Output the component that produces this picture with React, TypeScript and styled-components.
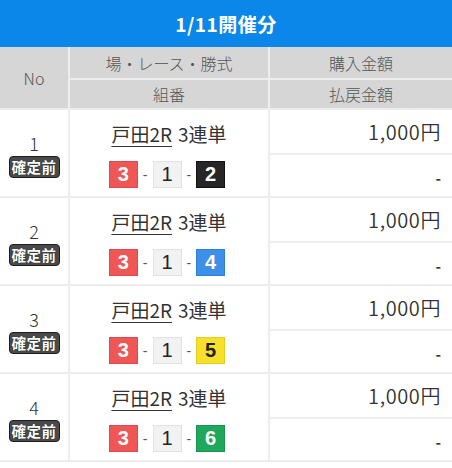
import React from "react";
import styled, { createGlobalStyle } from "styled-components";

const Global = createGlobalStyle`
  html, body { margin: 0; padding: 0; background: #fff; }
  body { font-family: "Noto Sans CJK JP", "Noto Sans", sans-serif; color: #333; }
`;

const Wrap = styled.div`
  width: 452px;
`;

const Title = styled.div`
  height: 47px;
  background: #0a87e8;
  color: #fff;
  font-size: 19px;
  font-weight: 700;
  display: flex;
  align-items: center;
  justify-content: center;
  letter-spacing: 0.5px;
`;

const Table = styled.div`
  display: grid;
  grid-template-columns: 68px 198px 1fr;
  column-gap: 2px;
  row-gap: 2px;
  background: #ededed;
  padding-bottom: 2px;
`;

const HeadGrid = styled.div`
  display: grid;
  grid-column: 1 / -1;
  grid-template-columns: 68px 198px 1fr;
  grid-template-rows: 31px 28px;
  gap: 2px;
`;

const HeadCell = styled.div<{ $span?: boolean }>`
  background: #d6d6d6;
  color: #555;
  font-size: 16px;
  font-weight: 300;
  display: flex;
  align-items: center;
  justify-content: center;
  ${(p) => (p.$span ? "grid-row: span 2;" : "")}
`;

const Entry = styled.div`
  display: grid;
  grid-column: 1 / -1;
  grid-template-columns: 68px 198px 1fr;
  grid-template-rows: 43px 41px;
  gap: 2px;
`;

const NoCell = styled.div`
  grid-row: span 2;
  background: #fff;
  display: flex;
  flex-direction: column;
  align-items: center;
  justify-content: center;
  gap: 3px;
  padding-top: 4px;
`;

const NoNum = styled.div`
  font-size: 18px;
  font-weight: 300;
  color: #333;
  line-height: 20px;
`;

const Badge = styled.div`
  background: #4a4a4a;
  border: 1px solid #1e1e1e;
  border-radius: 4px;
  color: #fff;
  font-size: 14.5px;
  font-weight: 700;
  line-height: 20px;
  padding: 0 2px;
  letter-spacing: 0.5px;
  text-shadow: 0 0 1px #000;
`;

const RaceCell = styled.div`
  grid-row: span 2;
  background: #fff;
  display: flex;
  flex-direction: column;
  align-items: center;
`;

const RaceName = styled.div`
  height: 43px;
  display: flex;
  align-items: center;
  justify-content: center;
  gap: 6px;
  font-size: 19px;
  color: #333;
  padding-top: 2px;
`;

const Place = styled.span`
  text-decoration: underline;
  text-underline-offset: 4px;
  text-decoration-thickness: 1px;
`;

const Combo = styled.div`
  flex: 1;
  display: flex;
  align-items: center;
  justify-content: center;
  gap: 5px;
  padding-bottom: 2px;
  padding-right: 4px;
`;

const boat: Record<string, { bg: string; fg: string; bd: string }> = {
  "1": { bg: "#f2f2f2", fg: "#222", bd: "#e2e2e2" },
  "2": { bg: "#262626", fg: "#fff", bd: "#111" },
  "3": { bg: "#ef5757", fg: "#fff", bd: "#e04a4a" },
  "4": { bg: "#3d8fe8", fg: "#fff", bd: "#2f80d8" },
  "5": { bg: "#f6e02b", fg: "#222", bd: "#e6cf1a" },
  "6": { bg: "#1fa75c", fg: "#fff", bd: "#169450" },
};

const Boat = styled.span<{ $n: string }>`
  width: 29px;
  height: 27px;
  box-sizing: border-box;
  display: inline-flex;
  align-items: center;
  justify-content: center;
  background: ${(p) => boat[p.$n].bg};
  color: ${(p) => boat[p.$n].fg};
  border: 1px solid ${(p) => boat[p.$n].bd};
  font-family: "Liberation Sans", sans-serif;
  font-weight: ${(p) => (p.$n === "1" ? 400 : 700)};
  font-size: 20px;
`;

const Dash = styled.span`
  color: #555;
  font-size: 14px;
  font-family: "Liberation Sans", sans-serif;
`;

const AmountCell = styled.div<{ $small?: boolean }>`
  background: #fff;
  display: flex;
  align-items: center;
  justify-content: flex-end;
  padding-right: 11px;
  font-size: ${(p) => (p.$small ? "15px" : "20px")};
  font-weight: ${(p) => (p.$small ? 700 : 400)};
  color: #333;
  padding-top: ${(p) => (p.$small ? "3px" : "0")};
`;

const Amount = styled.span`
  font-weight: 350;
  letter-spacing: 0.6px;
`;

const rows = [
  { no: "1", combo: ["3", "1", "2"] },
  { no: "2", combo: ["3", "1", "4"] },
  { no: "3", combo: ["3", "1", "5"] },
  { no: "4", combo: ["3", "1", "6"] },
];

export default function App() {
  return (
    <Wrap>
      <Global />
      <Title>1/11開催分</Title>
      <Table>
        <HeadGrid>
          <HeadCell $span>No</HeadCell>
          <HeadCell>場・レース・勝式</HeadCell>
          <HeadCell>購入金額</HeadCell>
          <HeadCell>組番</HeadCell>
          <HeadCell>払戻金額</HeadCell>
        </HeadGrid>
        {rows.map((r) => (
          <Entry key={r.no}>
            <NoCell>
              <NoNum>{r.no}</NoNum>
              <Badge>確定前</Badge>
            </NoCell>
            <RaceCell>
              <RaceName>
                <Place>戸田2R</Place>
                <span>3連単</span>
              </RaceName>
              <Combo>
                <Boat $n={r.combo[0]}>{r.combo[0]}</Boat>
                <Dash>-</Dash>
                <Boat $n={r.combo[1]}>{r.combo[1]}</Boat>
                <Dash>-</Dash>
                <Boat $n={r.combo[2]}>{r.combo[2]}</Boat>
              </Combo>
            </RaceCell>
            <AmountCell>
              <Amount>1,000円</Amount>
            </AmountCell>
            <AmountCell $small>-</AmountCell>
          </Entry>
        ))}
      </Table>
    </Wrap>
  );
}
